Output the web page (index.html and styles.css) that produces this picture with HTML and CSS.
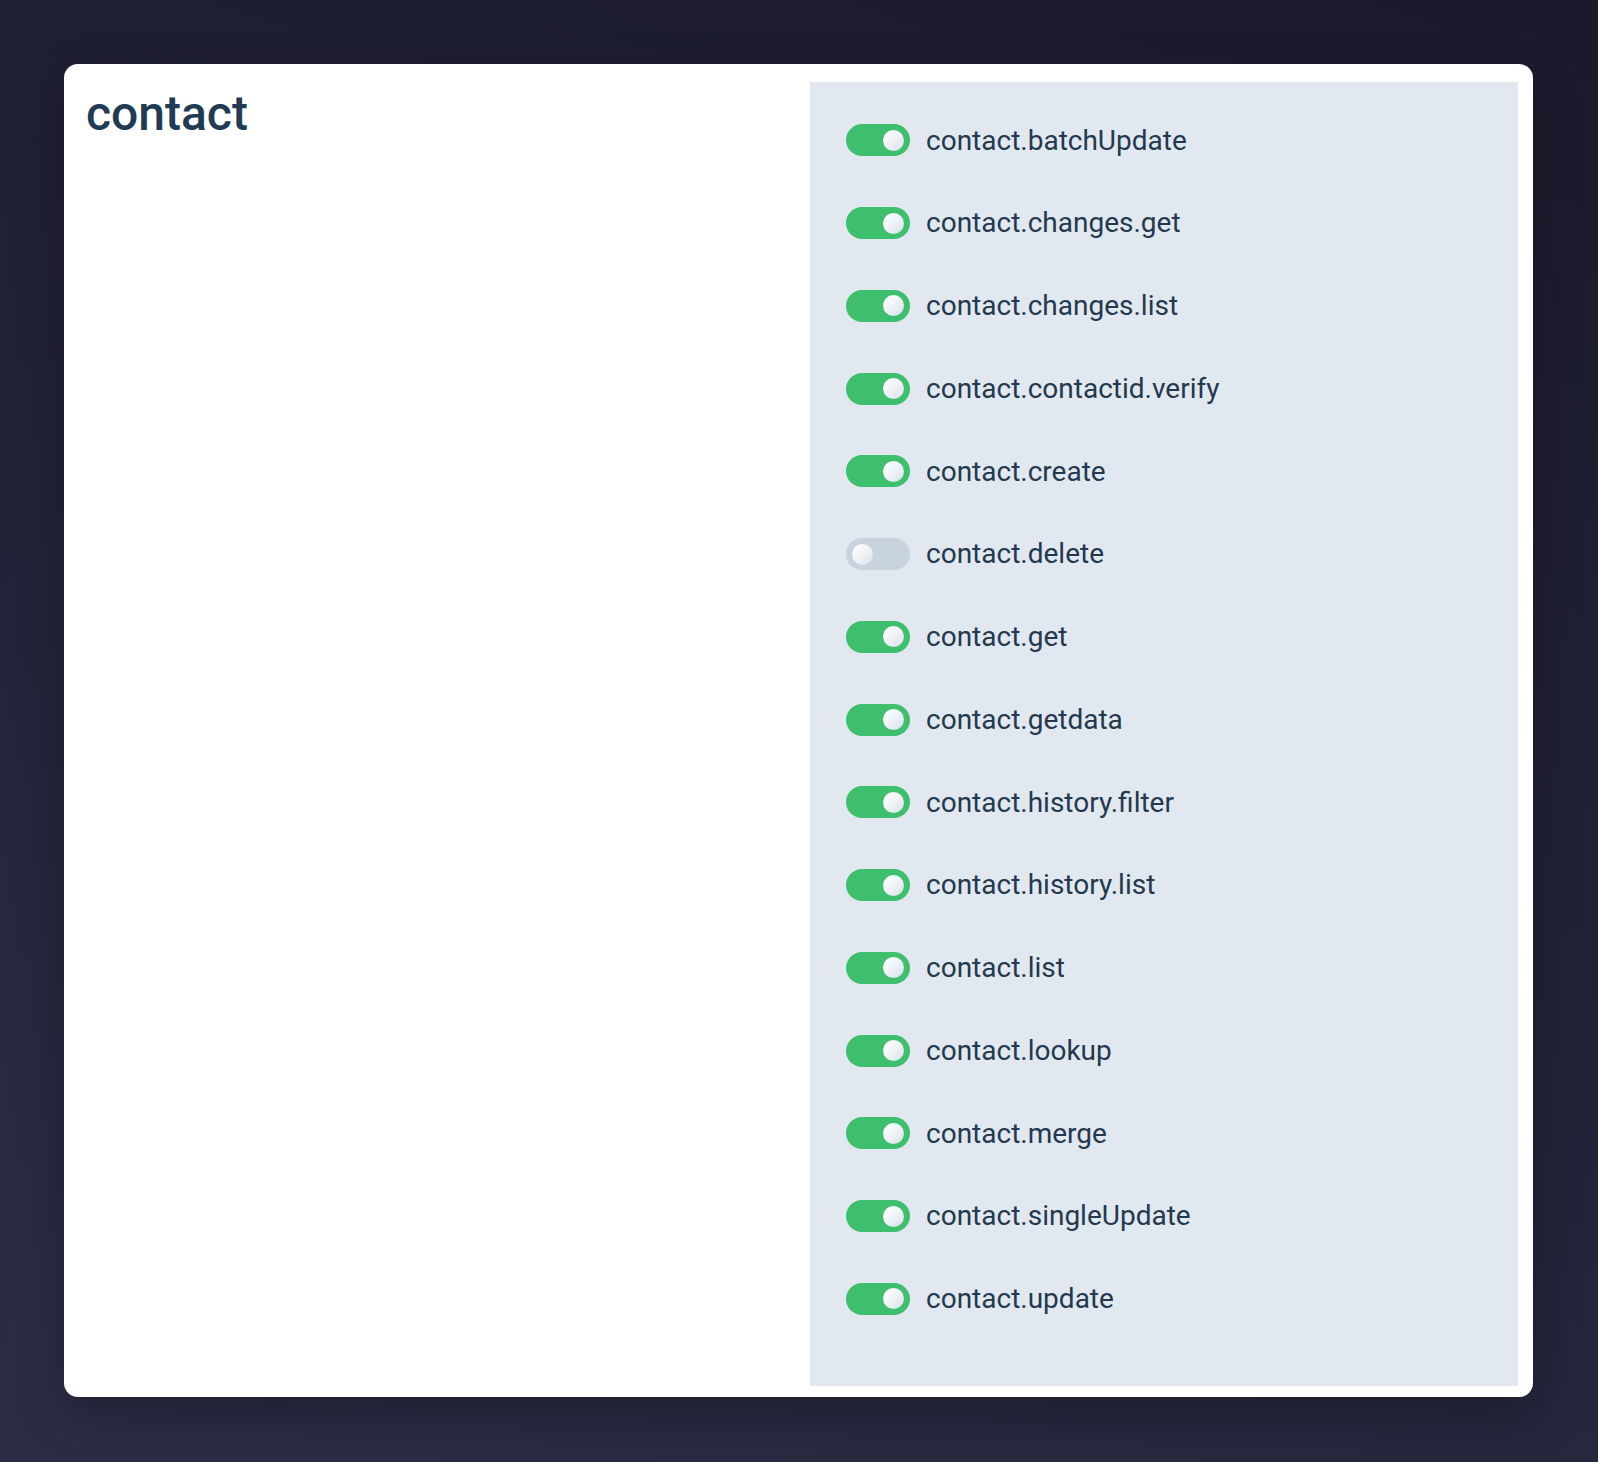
FILE: index.html
```
<!DOCTYPE html>
<html lang="en">
<head>
    <meta charset="UTF-8">
    <meta name="viewport" content="width=device-width, initial-scale=1.0">
    <title>contact - permissions</title>
    <link rel="stylesheet" href="styles.css">
</head>
<body>
    <div class="card">
        <div class="scope">
            <h1>contact</h1>
        </div>

        <ul class="perm-list">
            <li class="perm"><span class="toggle on"></span><span class="perm-name">contact.batchUpdate</span></li>
            <li class="perm"><span class="toggle on"></span><span class="perm-name">contact.changes.get</span></li>
            <li class="perm"><span class="toggle on"></span><span class="perm-name">contact.changes.list</span></li>
            <li class="perm"><span class="toggle on"></span><span class="perm-name">contact.contactid.verify</span></li>
            <li class="perm"><span class="toggle on"></span><span class="perm-name">contact.create</span></li>
            <li class="perm"><span class="toggle"></span><span class="perm-name">contact.delete</span></li>
            <li class="perm"><span class="toggle on"></span><span class="perm-name">contact.get</span></li>
            <li class="perm"><span class="toggle on"></span><span class="perm-name">contact.getdata</span></li>
            <li class="perm"><span class="toggle on"></span><span class="perm-name">contact.history.filter</span></li>
            <li class="perm"><span class="toggle on"></span><span class="perm-name">contact.history.list</span></li>
            <li class="perm"><span class="toggle on"></span><span class="perm-name">contact.list</span></li>
            <li class="perm"><span class="toggle on"></span><span class="perm-name">contact.lookup</span></li>
            <li class="perm"><span class="toggle on"></span><span class="perm-name">contact.merge</span></li>
            <li class="perm"><span class="toggle on"></span><span class="perm-name">contact.singleUpdate</span></li>
            <li class="perm"><span class="toggle on"></span><span class="perm-name">contact.update</span></li>
        </ul>
    </div>
</body>
</html>
```

FILE: styles.css
```
* {
    margin: 0;
    padding: 0;
    box-sizing: border-box;
}

html, body {
    height: 100%;
}

body {
    font-family: Roboto, 'Liberation Sans', sans-serif;
    background: linear-gradient(20deg, #2d2d46 0%, #232338 45%, #1b1a2c 100%);
    padding: 64px 65px 65px 64px;
    overflow: hidden;
}

.card {
    height: 100%;
    background: #fff;
    border-radius: 14px;
    padding: 18px 15px 11px 22px;
    display: grid;
    grid-template-columns: 1fr 708px;
    box-shadow: 0 20px 50px rgba(0, 0, 0, 0.25);
}

.scope h1 {
    margin-top: 3px;
    font-size: 48px;
    line-height: 1.2;
    font-weight: 500;
    color: #213b55;
}

.perm-list {
    list-style: none;
    background: #e1e8f0;
    padding: 17px 36px 40px;
}

.perm {
    height: 82.75px;
    display: flex;
    align-items: center;
    gap: 16px;
}

.toggle {
    position: relative;
    flex-shrink: 0;
    width: 64px;
    height: 32px;
    border-radius: 16px;
    background: #c8d3de;
}

.toggle::after {
    content: '';
    position: absolute;
    top: 5.5px;
    left: 6px;
    width: 21px;
    height: 21px;
    border-radius: 50%;
    background: linear-gradient(135deg, #ffffff 0%, #f2f4f8 45%, #d9dfea 100%);
}

.toggle.on {
    background: #3dbf6d;
}

.toggle.on::after {
    left: auto;
    right: 6px;
}

.perm-name {
    font-size: 28px;
    color: #24384e;
    line-height: 1.2;
}
```
